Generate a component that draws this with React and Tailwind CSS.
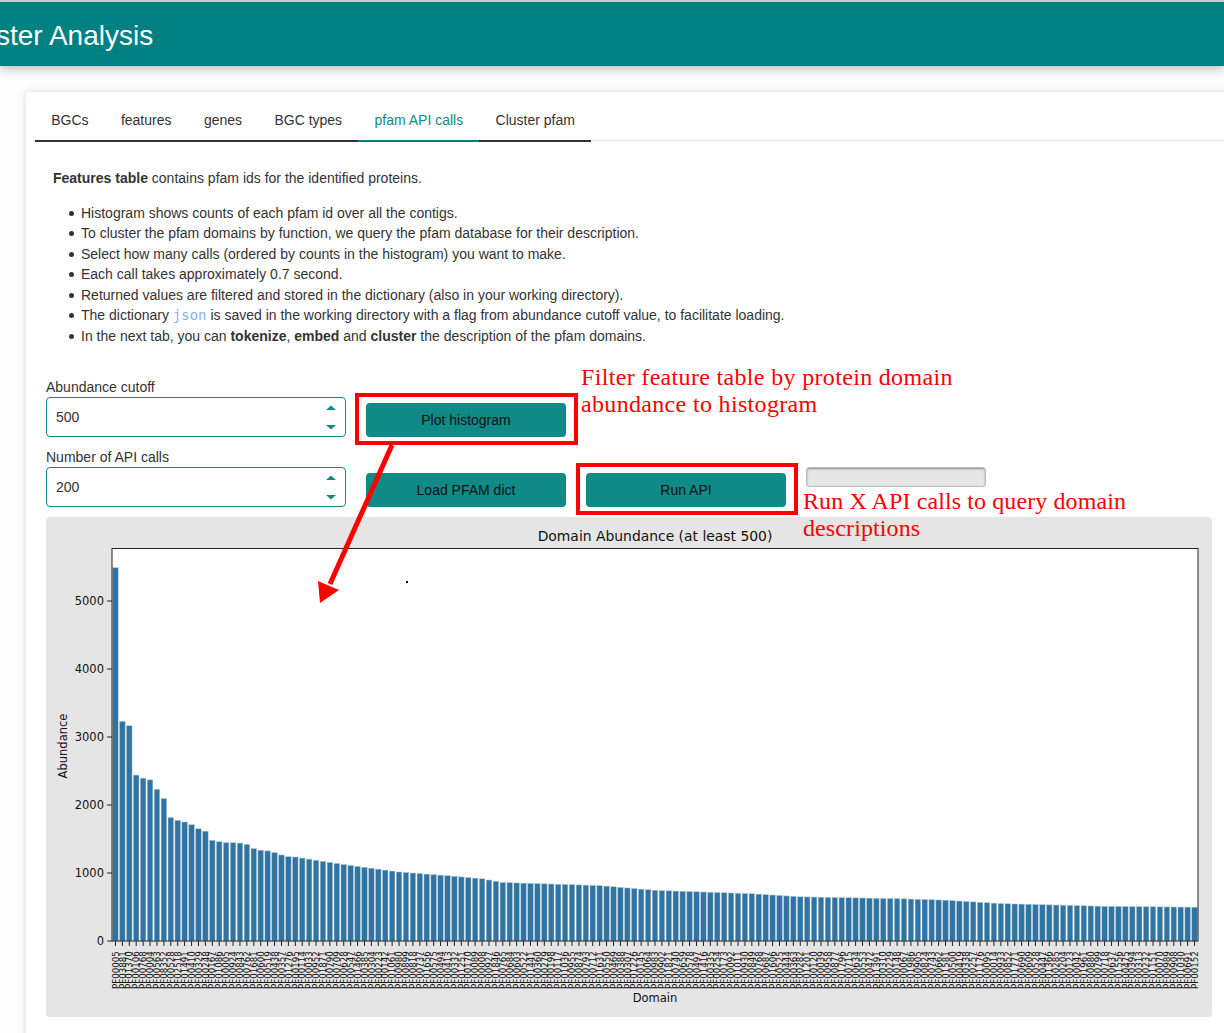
import { useMemo } from 'react';

const TABS = ['BGCs', 'features', 'genes', 'BGC types', 'pfam API calls', 'Cluster pfam'];

const HEAD = [5490, 3230, 3165, 2440, 2395, 2370, 2230, 2095, 1815, 1775, 1750, 1710, 1650, 1615, 1480, 1460, 1445, 1445, 1440, 1420, 1360, 1335, 1325, 1300, 1265, 1240];
const ANCHORS = [[26, 1235], [33, 1125], [41, 1015], [48, 960], [53, 915], [56, 860], [70, 815], [78, 745], [92, 695], [99, 650], [114, 620], [120, 600], [128, 550], [143, 510], [156, 497]];
const FIRST_IDS = ['PF00005', 'PF03881', 'PF01370', 'PF00106', 'PF00768', 'PF00004', 'PF00563', 'PF08352', 'PF00528', 'PF02518'];
const LAST_IDS = ['PF01030', 'PF00691', 'PF00152'];

function barValue(i) {
  if (i < HEAD.length) return HEAD[i];
  for (let k = 0; k < ANCHORS.length - 1; k++) {
    const [a, va] = ANCHORS[k];
    const [b, vb] = ANCHORS[k + 1];
    if (i >= a && i <= b) return va + ((vb - va) * (i - a)) / (b - a);
  }
  return 497;
}

function domainId(i) {
  if (i < FIRST_IDS.length) return FIRST_IDS[i];
  if (i >= 154) return LAST_IDS[i - 154];
  const n = (i * 7919 + 1301) % 9000;
  const first = i % 5 === 0 ? '1' : '0';
  return 'PF0' + first + String(n % 1000).padStart(3, '0');
}

function Chart() {
  const count = 157;
  const step = 1086 / count;
  const bars = useMemo(() => Array.from({ length: count }, (_, i) => i), []);
  const font = { fontFamily: '"DejaVu Sans", sans-serif' };

  return (
    <svg viewBox="46 516 1166 500" className="block w-[1166px] h-[500px]" style={font}>
      <text x="655" y="540" textAnchor="middle" fontSize="13.9" fill="#111">Domain Abundance (at least 500)</text>
      <rect x="112" y="548" width="1086" height="392" fill="#fff" />
      {bars.map((i) => {
        const h = barValue(i) * 0.068;
        const cx = 112 + step * (i + 0.5);
        return (
          <g key={i}>
            <rect x={cx - 2.77} y={940 - h} width="5.54" height={h} fill="#3274a1" stroke="#a9c6da" strokeWidth="0.5" />
            <line x1={cx} x2={cx} y1="940" y2="945" stroke="#222" strokeWidth="1" />
            <text transform={`translate(${cx + 3.2} 988) rotate(-90)`} fontSize="8.7" fill="#111">{domainId(i)}</text>
          </g>
        );
      })}
      <rect x="112" y="547.5" width="1086" height="392.5" fill="none" stroke="#222" strokeWidth="1" />
      {[0, 1000, 2000, 3000, 4000, 5000].map((v) => {
        const y = 940 - v * 0.068;
        return (
          <g key={v}>
            <line x1="107" x2="112" y1={y} y2={y} stroke="#222" strokeWidth="1" />
            <text x="104" y={y + 4} textAnchor="end" fontSize="11.5" fill="#111">{v}</text>
          </g>
        );
      })}
      <text transform="translate(67 745) rotate(-90)" textAnchor="middle" fontSize="11.5" fill="#111">Abundance</text>
      <text x="655" y="1001" textAnchor="middle" fontSize="11.5" fill="#111">Domain</text>
    </svg>
  );
}

function NumberField({ label, value }) {
  return (
    <div className="w-[300px]">
      <div className="text-sm leading-[20px] text-[#333]">{label}</div>
      <div className="flex items-center h-10 border border-[#0f8a87] rounded bg-white pl-[9px] pr-[8px]">
        <input type="text" defaultValue={value} className="flex-1 min-w-0 text-sm text-[#333] outline-none" />
        <svg width="12" height="30" viewBox="0 0 12 30">
          <path d="M1 8 L6 3.5 L11 8 Z" fill="#0f8a87" />
          <path d="M1 23 L11 23 L6 27.5 Z" fill="#0f8a87" />
        </svg>
      </div>
    </div>
  );
}

function ActionButton({ children }) {
  return (
    <button className="w-[200px] h-[34px] rounded bg-[#0f8a87] text-sm text-[#111]">{children}</button>
  );
}

function Bullet({ children }) {
  return (
    <li className="flex items-center">
      <span className="w-[5px] h-[5px] mr-[7px] rounded-full bg-[#333]" />
      <span>{children}</span>
    </li>
  );
}

function App() {
  return (
    <div className="relative h-[1033px] overflow-hidden bg-[#fdfdfd]" style={{ fontFamily: '"Liberation Sans", sans-serif' }}>
      <header className="relative z-10 flex items-center h-[66px] pt-[3px] border-t-2 border-[#c4cccc] bg-[#008080] shadow-[0_2px_10px_rgba(0,0,0,0.3)]">
        <h1 className="-ml-[46px] text-[28px] text-white whitespace-nowrap">Cluster Analysis</h1>
      </header>

      <main className="ml-[26px] mt-[26px] w-[1240px] h-[960px] bg-white shadow-[0_0_8px_rgba(0,0,0,0.15)] pt-[2px]">
        <div className="flex h-12 pl-[9px] pr-[40px]">
          {TABS.map((tab) => (
            <div
              key={tab}
              className={`flex items-center px-[16.2px] pt-[6px] text-sm border-b-2 ${tab === 'pfam API calls' ? 'text-[#0f8a87] border-[#008080]' : 'text-[#333] border-[#333]'}`}
            >
              {tab}
            </div>
          ))}
          <div className="flex-1 border-b border-[#e6e6e6] mb-px" />
        </div>

        <div className="pl-[20px] pt-[26px]">
          <div className="pl-[7px] text-sm leading-5 text-[#333]">
            <p><strong className="font-bold">Features table</strong> contains pfam ids for the identified proteins.</p>
            <ul className="pl-[16px] mt-[14.75px] leading-[20.5px]">
              <Bullet>Histogram shows counts of each pfam id over all the contigs.</Bullet>
              <Bullet>To cluster the pfam domains by function, we query the pfam database for their description.</Bullet>
              <Bullet>Select how many calls (ordered by counts in the histogram) you want to make.</Bullet>
              <Bullet>Each call takes approximately 0.7 second.</Bullet>
              <Bullet>Returned values are filtered and stored in the dictionary (also in your working directory).</Bullet>
              <Bullet>
                The dictionary <code className="text-[#86aef5]" style={{ fontFamily: '"DejaVu Sans Mono", monospace' }}>json</code> is saved in the working directory with a flag from abundance cutoff value, to facilitate loading.
              </Bullet>
              <Bullet>In the next tab, you can <strong className="font-bold">tokenize</strong>, <strong className="font-bold">embed</strong> and <strong className="font-bold">cluster</strong> the description of the pfam domains.</Bullet>
            </ul>
          </div>

          <div className="mt-[30.25px] flex flex-col gap-[10px]">
            <div className="flex items-end gap-5">
              <NumberField label="Abundance cutoff" value="500" />
              <ActionButton>Plot histogram</ActionButton>
            </div>
            <div className="flex items-end gap-5">
              <NumberField label="Number of API calls" value="200" />
              <ActionButton>Load PFAM dict</ActionButton>
              <ActionButton>Run API</ActionButton>
              <div className="self-start mt-[20px] w-[180px] h-5 rounded-[3px] bg-[#e6e6e6] border border-[#bbbbbb] shadow-[inset_0_1px_2px_rgba(0,0,0,0.4)]" />
            </div>
          </div>

          <div className="mt-[10px] w-[1166px] h-[500px] rounded bg-[#e5e5e5]">
            <Chart />
          </div>
        </div>
      </main>

      {/* annotations drawn over the app */}
      <div className="absolute left-[355px] top-[393px] w-[223px] h-[52px] border-4 border-[#ff0000]" />
      <div className="absolute left-[576px] top-[463px] w-[222px] h-[52px] border-4 border-[#ff0000]" />
      <svg className="absolute left-[310px] top-[440px]" width="90" height="170" viewBox="310 440 90 170">
        <line x1="392" y1="445" x2="330" y2="584" stroke="#ff0000" strokeWidth="5" />
        <path d="M318 581 L339 590 L320 603 Z" fill="#ff0000" />
      </svg>
      <div className="absolute left-[406px] top-[581px] w-[2px] h-[2px] bg-black" />
      <div className="absolute left-[581px] top-[364px] text-[24px] leading-[27px] tracking-[0.33px] text-[#ff0000] whitespace-nowrap" style={{ fontFamily: '"Liberation Serif", serif' }}>
        Filter feature table by protein domain<br />abundance to histogram
      </div>
      <div className="absolute left-[803px] top-[488px] text-[24px] leading-[27px] tracking-[0.1px] text-[#ff0000] whitespace-nowrap" style={{ fontFamily: '"Liberation Serif", serif' }}>
        Run X API calls to query domain<br />descriptions
      </div>
    </div>
  );
}

export default App;
